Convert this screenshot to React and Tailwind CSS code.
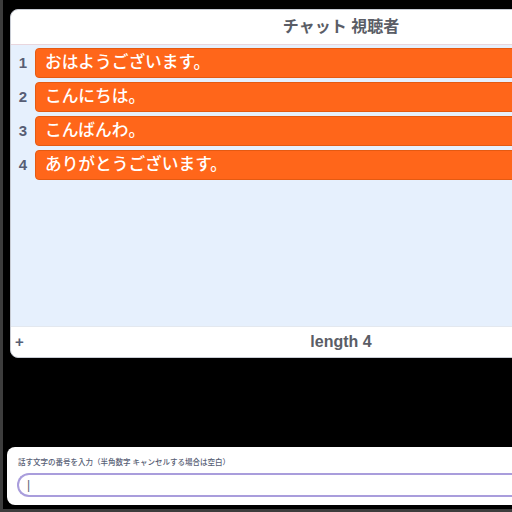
import React from "react";

const items = ["おはようございます。", "こんにちは。", "こんばんわ。", "ありがとうございます。"];

export default function App() {
  return (
    <div
      className="w-[512px] h-[512px] bg-black overflow-hidden flex flex-col border-l-[3px] border-b-[3px] border-[#3d3d3d]"
      style={{ fontFamily: '"Liberation Sans", "Noto Sans CJK JP", sans-serif' }}
    >
      <div className="pl-[7px] pt-[9px]">
        <div className="w-[662px] rounded-lg bg-white overflow-hidden border border-[#c8ccd4] flex flex-col">
          <div className="h-[35px] flex items-center justify-center text-[16px] font-bold text-[#5a5d66] border-b border-[#e9d6dd]">
            チャット 視聴者
          </div>
          <div className="h-[281px] bg-[#e6f0fd] pt-[3px] flex flex-col gap-[4px]">
            {items.map((t, i) => (
              <div key={i} className="flex items-center h-[30px]">
                <div className="w-[24px] text-center text-[15px] font-bold text-[#575e75]">{i + 1}</div>
                <div className="flex-1 h-[30px] rounded-[4px] bg-[#ff661a] border border-[#e45a12] flex items-center pl-[9px] text-white text-[16.7px] font-medium">
                  {t}
                </div>
              </div>
            ))}
          </div>
          <div className="h-[31px] flex items-center relative border-t border-[#e3e8ef]">
            <span className="absolute left-[4px] text-[15px] font-bold text-[#575e75]">+</span>
            <div className="flex-1 text-center text-[16px] font-bold text-[#5a5d66]">length 4</div>
          </div>
        </div>
      </div>
      <div className="flex-1" />
      <div className="pl-[4px] mb-[4px]">
        <div className="h-[58px] bg-white rounded-l-lg pl-[10px] pt-[11px] flex flex-col">
          <div className="text-[7.5px] font-medium text-[#575e75] leading-[9px] pl-[1px]">話す文字の番号を入力（半角数字 キャンセルする場合は空白）</div>
          <div className="mt-[6px] h-[24px] rounded-l-full border-2 border-r-0 border-[#a99ddc] flex items-center pl-[8px]">
            <span className="text-[12px] text-[#575e75] leading-none">|</span>
          </div>
        </div>
      </div>
    </div>
  );
}
